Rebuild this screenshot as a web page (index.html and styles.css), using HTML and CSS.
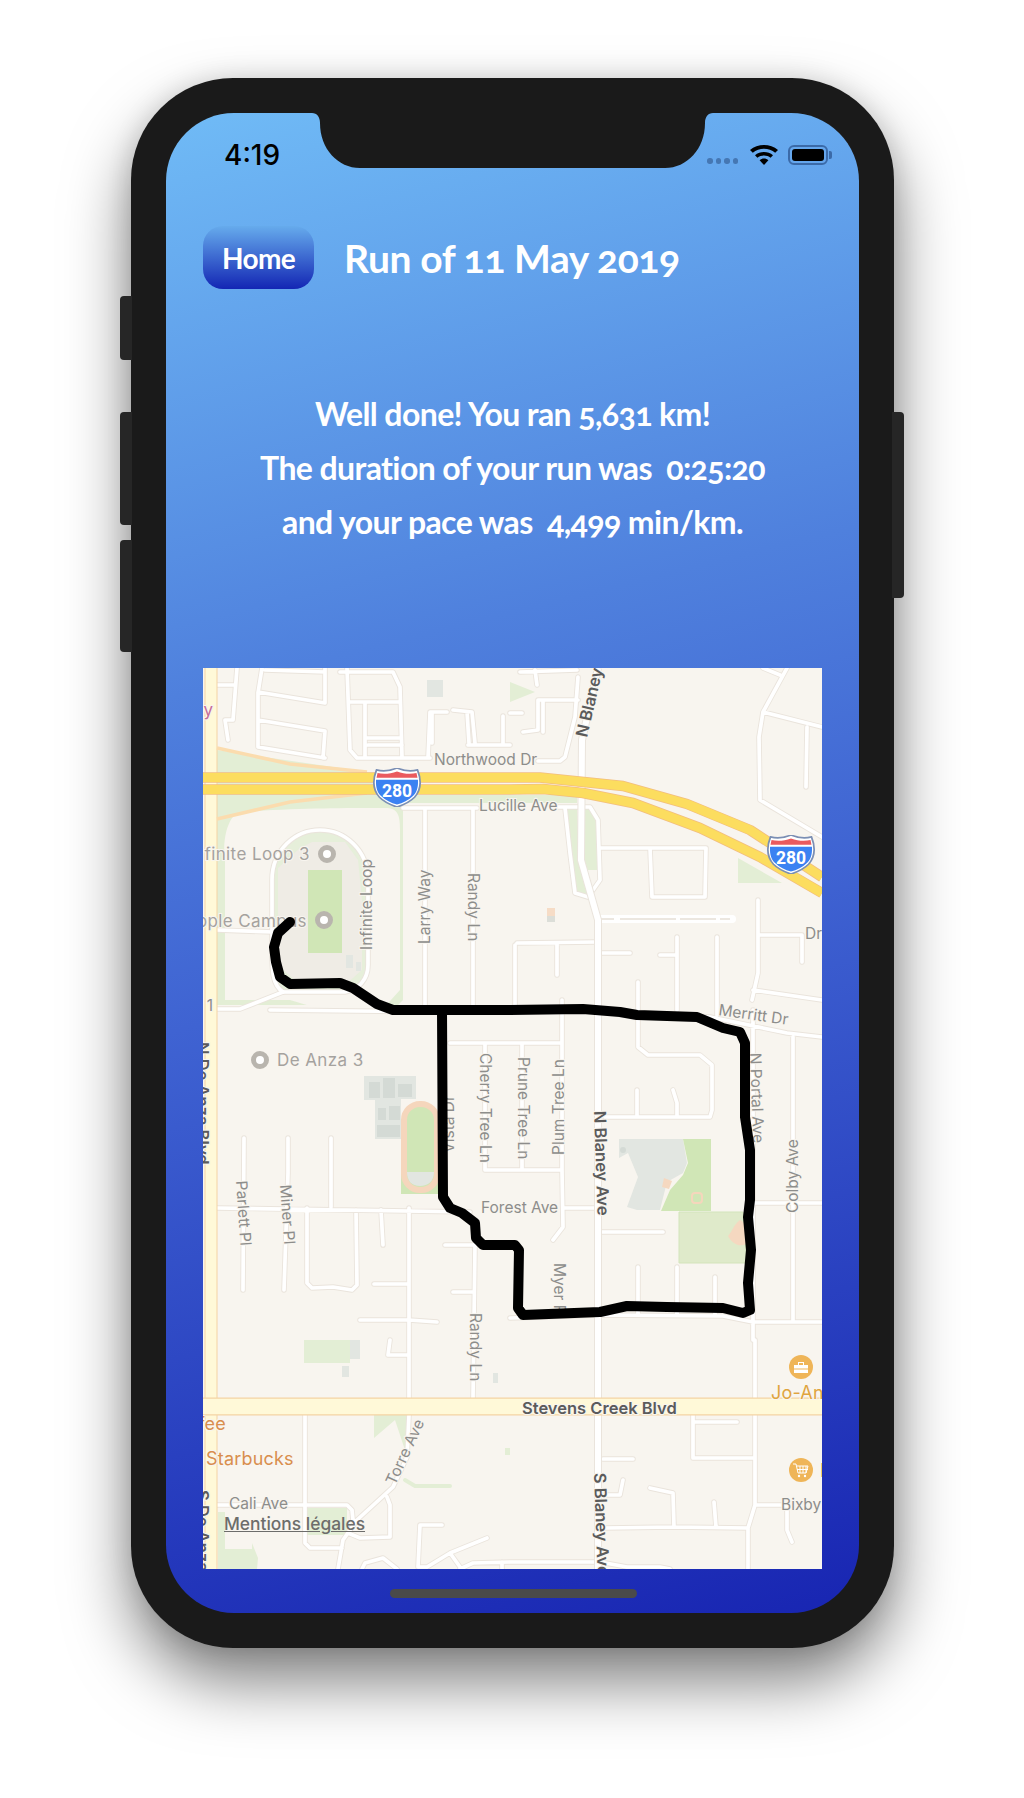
FILE: index.html
```html
<!DOCTYPE html>
<html lang="en">
<head>
<meta charset="utf-8">
<title>Run of 11 May 2019</title>
<link rel="stylesheet" href="styles.css">
</head>
<body>
<div class="phone">
  <span class="side-btn side-mute"></span>
  <span class="side-btn side-up"></span>
  <span class="side-btn side-down"></span>
  <span class="side-btn side-power"></span>
  <main class="screen">
    <svg class="notch" viewBox="0 0 401 55" aria-hidden="true"><path d="M0 0C5 0 8 4 8 10C8 36 26 55 48 55L353 55C375 55 393 36 393 10C393 4 396 0 401 0Z"/></svg>
    <div class="status">
      <span class="clock">4:19</span>
      <div class="status-icons">
        <span class="signal"><i></i><i></i><i></i><i></i></span>
        <svg class="wifi" viewBox="0 0 28 20" aria-hidden="true">
          <path d="M14 20L9.6 15.2C12.2 13 15.8 13 18.4 15.2Z"/>
          <path d="M7.4 12.8L5 10.2C9.9 5.9 18.1 5.9 23 10.2L20.6 12.8C16.9 9.6 11.1 9.6 7.4 12.8Z"/>
          <path d="M2.8 7.8L0 4.9C7.7-1.6 20.3-1.6 28 4.9L25.2 7.8C18.9 2.5 9.1 2.5 2.8 7.8Z"/>
        </svg>
        <span class="battery"><i></i></span>
      </div>
    </div>
    <header class="top">
      <a class="home" href="#">Home</a>
      <h1 class="title">Run of 11 May 2019</h1>
    </header>
    <section class="message">
      <p>Well done! You ran 5,631 km!</p>
      <p>The duration of your run was&nbsp; 0:25:20</p>
      <p>and your pace was&nbsp; 4,499 min/km.</p>
    </section>
    <div class="map">
      <svg class="map-svg" viewBox="203 668 619 901" aria-label="Map of the run">
        <defs>
          <path id="roads" d="M217 685H235M237 668L233 720H225L228 740M262 668L258 693V747L325 758M258 692L325 703V668M258 720L325 731L323 758M265 670L325 672M340 672H393L400 687L402 757M347 668L350 750L357 758H430M350 702H400M365 703V757M365 738H400M368 745H402M428 758L430 712H447M453 710L472 712L475 743M432 712V743M467 712L469 743M503 716V743M468 745H510M520 672L577 670M535 670L537 685M538 700H578M538 700V730L523 732M543 700V732M510 713H522M578 677L575 717L565 757L560 761H538M787 668L763 712L759 737L760 800L822 837M763 712L822 727M807 727L806 787M763 668L780 675M403 808H477M425 810V1010M473 810V1010M558 807H590L598 820L600 880L593 890L588 897L575 893L570 853L565 808M600 848H706L705 897H652L650 848M598 953H630M660 955H677M677 937V1010M717 937V1015M638 982V1047L648 1055H700L712 1065V1110L710 1117H605M758 900V973L752 1000M758 935H802V962M753 990L822 1000M517 943L597 942M515 945V1012M557 943V975M217 930L273 932M217 1009H240L283 992M270 1010L443 1012L600 1010L710 1017L787 1033L822 1037M753 1010V1340M755 1340V1505L748 1528V1569M450 1043H562M562 1000V1170L563 1227L553 1240M522 1043V1170M485 1043V1170H562M637 1090V1117M673 1090L677 1103V1117M793 1037V1320M753 1203H822M563 1208H599M599 1232H663M638 1267V1315M677 1267V1315M715 1277V1315M510 1318L600 1315L723 1316L753 1322H822M475 1245H445M475 1245L473 1398M453 1292H473M244 1138L243 1290M288 1138V1173L284 1290M331 1138V1207M217 1208L470 1212M307 1208V1283L312 1288L333 1287L352 1290L357 1285L356 1210M381 1210L383 1245M409 1208V1398M374 1284H409M360 1320H409L437 1322M390 1340L388 1355H409M305 1415V1543L310 1548H342M217 1505H347L352 1510L353 1520L357 1522M409 1415L407 1457L393 1487L357 1520L343 1540L338 1569M387 1497L390 1505V1537L360 1538L348 1533M420 1525H442M420 1525L418 1567H427L450 1553L487 1538M450 1553L460 1567M362 1569L365 1563L383 1558L397 1569M460 1569L473 1563L510 1562H600L627 1567H660L670 1569M502 1562V1569M755 1505H787V1530L792 1542M603 1459H633M693 1413V1458H755M695 1422H737M608 1495H620L623 1480M650 1488L673 1493L674 1527M714 1502L716 1527M605 1528L673 1527L748 1528M755 1340V1400"/>
          <path id="loop" d="M283 992C272 985 272 970 272 950V880C272 850 295 830 320 830C345 830 368 850 368 880V965C368 980 358 990 345 992L283 992"/>
          <path id="wide" d="M598 668L582 740L581 860L598 920V1569"/>
          <symbol id="shield" viewBox="0 0 50 40">
            <path class="shield-edge" d="M4 2C11 4 18 3 25 0C32 3 39 4 46 2C50 12 50 22 43 30C38 35 31 38 25 40C19 38 12 35 7 30C0 22 0 12 4 2Z"/>
            <path class="shield-red" d="M5 5C11 6.5 18 6 25 3.5C32 6 39 6.5 45 5L46 10H4Z"/>
            <path class="shield-blue" d="M3.5 12H46.5C47 20 45 25.500 41 29C37 33 31 36 25 37.500C19 36 13 33 9 29C5 25.500 3 20 3.500 12Z"/>
            <text class="shield-text" x="25" y="30">280</text>
          </symbol>
        </defs>
        <rect class="land" x="203" y="668" width="619" height="901"/>

        <path class="green" d="M217 750L367 772L403 775V1000L390 1013H350L330 1005H217Z"/>
        <path class="green" d="M403 795H577V803H403Z"/>
        <path class="land" d="M240 812C300 808 340 808 385 808C398 808 400 815 400 830V990L380 1012H330L290 1000H225V860C222 840 228 815 240 812Z"/>
        <path class="green-soft" d="M272 880C272 850 295 832 320 832C345 832 368 850 368 880V965C368 980 358 990 345 990H285C275 985 272 970 272 950Z"/>
        <path class="bldg-soft" d="M278 868L300 848L312 842L345 842L358 860L362 900V970L345 985H300L278 965Z"/>
        <rect class="green-mid" x="308" y="870" width="34" height="83"/>
        <rect class="bldg" x="346" y="955" width="7" height="13"/>
        <rect class="bldg" x="356" y="962" width="5" height="9"/>
        <path class="green" d="M510 682L535 692L510 702ZM738 858L782 883H738ZM565 808H577L579 860L588 895L577 893L570 853ZM585 808H592L597 823V870H585V860Z"/>
        <rect class="bldg" x="427" y="680" width="16" height="17"/>
        <rect class="tile-peach" x="547" y="908" width="8" height="8"/>
        <rect class="tile-gray" x="547" y="916" width="8" height="6"/>

        <path class="bldg" d="M364 1076H416V1099H401V1139H375V1100H364Z"/>
        <path class="bldg-dark" d="M369 1082H380V1098H369ZM383 1078H395V1098H383ZM398 1084H412V1097H398ZM378 1108H386V1120H378ZM389 1106H400V1120H389ZM377 1125H400V1137H377Z"/>
        <rect class="green-mid" x="401" y="1170" width="37" height="24"/>
        <rect class="track" x="404" y="1104" width="33" height="86" rx="16"/>
        <path class="bldg" d="M407 1172H434C434 1181 428 1186 420 1186C412 1186 407 1181 407 1172Z"/>

        <path class="bldg" d="M619 1139H683L687 1163L683 1173L667 1182L660 1210H637L627 1207L638 1177L628 1153L619 1158Z"/>
        <circle class="bldg-dark" cx="623" cy="1150" r="3"/>
        <path class="green-mid" d="M683 1139H711V1211H661L670 1190L683 1175L688 1163Z"/>
        <path class="green-field" d="M679 1212H743L747 1263H679Z"/>
        <path class="peach" d="M664 1178L672 1181L669 1189L662 1187ZM740 1220C746 1222 747 1232 746 1244C740 1247 733 1245 728 1236C732 1232 734 1224 740 1220Z"/>
        <rect class="diamond" x="692" y="1193" width="10" height="10" rx="3"/>

        <path class="green" d="M304 1340H350V1363H304ZM374 1415H407L405 1450L395 1420L374 1438ZM505 1448H510V1455H505ZM218 1512H225V1549H252V1543L258 1558L257 1569H218ZM307 1508H347V1535H307Z"/>
        <path class="green-line" d="M405 1480L415 1486H450"/>
        <path class="bldg" d="M350 1340H360V1359H350ZM342 1366H349V1377H342ZM493 1373H498V1383H493Z"/>

        <use class="road-edge" href="#roads"/>
        <use class="road-edge" href="#loop"/>
        <use class="road" href="#roads"/>
        <use class="road" href="#loop"/>
        <path class="road-double" d="M600 919H732"/>
        <path class="road-median" d="M600 919H614M620 919H676M680 919H716M720 919H730"/>
        <use class="wide-edge" href="#wide"/>
        <use class="wide" href="#wide"/>

        <path class="art-edge art-v" d="M211 668V1569"/>
        <path class="art art-v" d="M211 668V1569"/>
        <path class="art-edge art-h" d="M203 1406.500H822"/>
        <path class="art art-h" d="M203 1406.500H822"/>
        <path class="ramp" d="M217 748L290 764L367 772M217 819L290 802L367 793"/>
        <path class="hw-edge" d="M203 777.500H510H540L623 786L687 804L750 830L822 877"/>
        <path class="hw-edge" d="M203 789.500H510L543 789L583 793L633 803L700 828L760 857L822 893"/>
        <path class="hw" d="M203 777.500H510H540L623 786L687 804L750 830L822 877"/>
        <path class="hw" d="M203 789.500H510L543 789L583 793L633 803L700 828L760 857L822 893"/>

        <use href="#shield" x="372" y="768" width="50" height="39"/>
        <use href="#shield" x="766" y="835" width="50" height="39"/>

        <text class="lbl" x="434" y="765">Northwood Dr</text>
        <text class="lbl" x="479" y="811">Lucille Ave</text>
        <text class="lbl" x="805" y="939">Dr</text>
        <text class="lbl" x="213" y="1011" text-anchor="end">1</text>
        <text class="lbl" transform="translate(372 950) rotate(-90)">Infinite Loop</text>
        <text class="lbl" transform="translate(430 944) rotate(-90)">Larry Way</text>
        <text class="lbl" transform="translate(468 873) rotate(90)">Randy Ln</text>
        <text class="lbl" transform="translate(454 1153) rotate(-90)">Vista Dr</text>
        <text class="lbl" transform="translate(480 1053) rotate(90)">Cherry Tree Ln</text>
        <text class="lbl" transform="translate(518 1057) rotate(90)">Prune Tree Ln</text>
        <text class="lbl" transform="translate(564 1155) rotate(-90)">Plum Tree Ln</text>
        <text class="lbl" transform="translate(750 1053) rotate(88)">N Portal Ave</text>
        <text class="lbl" transform="translate(798 1213) rotate(-90)">Colby Ave</text>
        <text class="lbl" transform="translate(718 1015) rotate(8)">Merritt Dr</text>
        <text class="lbl" x="481" y="1213">Forest Ave</text>
        <text class="lbl" transform="translate(554 1263) rotate(90)">Myer Pl</text>
        <text class="lbl" transform="translate(236 1181) rotate(86)">Parlett Pl</text>
        <text class="lbl" transform="translate(280 1185) rotate(86)">Miner Pl</text>
        <text class="lbl" transform="translate(470 1313) rotate(90)">Randy Ln</text>
        <text class="lbl" transform="translate(395 1486) rotate(-65)">Torre Ave</text>
        <text class="lbl" x="229" y="1509">Cali Ave</text>
        <text class="lbl" x="781" y="1510">Bixby</text>

        <text class="lbl-b" transform="translate(587 738) rotate(-77)">N Blaney</text>
        <text class="lbl-b" transform="translate(594 1111) rotate(88)">N Blaney Ave</text>
        <text class="lbl-b" transform="translate(594 1473) rotate(88)">S Blaney Ave</text>
        <text class="lbl-b" x="522" y="1414">Stevens Creek Blvd</text>
        <text class="lbl-b" transform="translate(197 1042) rotate(90)">N De Anza Blvd</text>
        <text class="lbl-b" transform="translate(197 1490) rotate(90)">S De Anza</text>

        <text class="poi" x="310" y="860" text-anchor="end">Infinite Loop 3</text>
        <text class="poi" x="307" y="927" text-anchor="end">Apple Campus</text>
        <text class="poi" x="277" y="1066">De Anza 3</text>
        <circle class="pin" cx="327" cy="854" r="6.500"/>
        <circle class="pin" cx="324" cy="920" r="6.500"/>
        <circle class="pin" cx="260" cy="1060" r="6.500"/>

        <text class="poi-pink" x="213" y="716" text-anchor="end">y</text>
        <text class="poi-orange" x="226" y="1430" text-anchor="end">Coffee</text>
        <text class="poi-orange" x="206" y="1465">Starbucks</text>
        <text class="poi-gold" x="771" y="1399">Jo-Ann</text>
        <text class="poi-gold" x="820" y="1477">Lucky</text>

        <circle class="shop" cx="801" cy="1367" r="12"/>
        <path class="shop-icon" d="M794 1365H808V1373H794ZM798 1365V1362H804V1365H803V1363H799V1365Z"/>
        <path class="shop-line" d="M794 1369H808"/>
        <circle class="shop" cx="801" cy="1470" r="12"/>
        <path class="shop-line" d="M793 1464H796L798 1473H806L808 1466H797M800 1466V1473M803 1466V1473M806 1466V1473M797 1469.500H808"/>
        <circle class="shop-dot" cx="799" cy="1476" r="1.200"/>
        <circle class="shop-dot" cx="805" cy="1476" r="1.200"/>

        <path class="route" d="M290 922L278 933L274 947L276 962L280 977L290 984L340 983L353 988L377 1004L393 1010L443 1010L510 1010L583 1009L620 1012L637 1015L697 1017L723 1028L740 1032L745 1043L745 1117L750 1150L750 1200L748 1217L751 1250L748 1283L750 1310L743 1313L723 1308L667 1307L627 1306L600 1312L523 1315L518 1308L519 1250L515 1245L483 1245L476 1238L475 1223L462 1213L450 1208L443 1197L442 1010"/>
      </svg>
      <a class="legal" href="#">Mentions légales</a>
    </div>
    <span class="home-bar"></span>
  </main>
</div>
</body>
</html>
```
FILE: styles.css
```css
* { box-sizing: border-box; }
html, body { margin: 0; padding: 0; background: #fff; }
body { min-height: 1798px; padding: 78px 0 0 131px; }

.phone {
  position: relative;
  width: 763px;
  height: 1570px;
  padding: 35px;
  background: #1a1a1a;
  border-radius: 102px;
  box-shadow: 0 34px 64px rgba(0, 0, 0, .5), 0 0 26px rgba(0, 0, 0, .12);
}
.side-btn { position: absolute; width: 12px; background: #262626; }
.side-mute { left: -11px; top: 218px; height: 64px; border-radius: 4px 0 0 4px; }
.side-up { left: -11px; top: 334px; height: 113px; border-radius: 4px 0 0 4px; }
.side-down { left: -11px; top: 462px; height: 112px; border-radius: 4px 0 0 4px; }
.side-power { right: -10px; top: 334px; height: 186px; border-radius: 0 4px 4px 0; }

.screen {
  position: relative;
  display: flex;
  flex-direction: column;
  height: 1500px;
  padding: 0 37px;
  overflow: hidden;
  border-radius: 68px;
  background: linear-gradient(166deg, #70bbf6 0%, #4f80dd 35%, #3f63d2 55%, #1825b2 100%);
  font-family: "Lato", "Noto Sans", sans-serif;
  color: #fff;
}
.notch { position: absolute; left: 146px; top: 0; width: 401px; height: 55px; fill: #1a1a1a; }

.status {
  display: flex;
  justify-content: space-between;
  align-items: flex-start;
  height: 113px;
  padding: 24px 0 0 21px;
  color: #000;
}
.clock { font: 500 28px/36px "Inter", sans-serif; }
.status-icons { display: flex; align-items: flex-start; margin-right: -6px; padding-top: 8px; }
.signal { display: flex; gap: 3px; margin: 13px 12px 0 0; }
.signal i { width: 5.5px; height: 5.5px; border-radius: 50%; background: #4577b3; }
.wifi { width: 28px; height: 20px; margin-right: 10px; fill: #000; }
.battery {
  position: relative;
  width: 40px;
  height: 20px;
  padding: 2px;
  border: 2px solid #3b6aa8;
  border-radius: 6px;
}
.battery i { display: block; height: 100%; background: #000; border-radius: 3px; }
.battery::after {
  content: "";
  position: absolute;
  right: -6px;
  top: 4px;
  width: 3px;
  height: 8px;
  background: #3b6aa8;
  border-radius: 0 2px 2px 0;
}

.top { display: flex; align-items: center; gap: 30px; height: 63px; }
.home {
  display: flex;
  align-items: center;
  justify-content: center;
  width: 111px;
  height: 63px;
  border-radius: 20px;
  background: linear-gradient(180deg, #66abec 0%, #1326b4 100%);
  color: #fff;
  font-size: 28px;
  font-weight: 700;
  letter-spacing: -.6px;
  text-decoration: none;
}
.title {
  margin: 0;
  font-size: 39px;
  font-weight: 700;
  letter-spacing: -.4px;
  font-variant-numeric: oldstyle-nums;
  white-space: nowrap;
}

.message {
  display: flex;
  flex-direction: column;
  align-items: center;
  margin-top: 98px;
  font-size: 32px;
  font-weight: 700;
  line-height: 54px;
  letter-spacing: -.6px;
  font-variant-numeric: oldstyle-nums;
}
.message p { margin: 0; white-space: nowrap; }

.map { position: relative; width: 619px; height: 901px; margin-top: 119px; flex: none; }
.map-svg { display: block; width: 619px; height: 901px; }
.legal {
  position: absolute;
  left: 21px;
  top: 846px;
  font: 500 17.400px/20px "Inter", sans-serif;
  color: #6d6d6b;
}
.home-bar {
  position: absolute;
  left: 224px;
  bottom: 15px;
  width: 247px;
  height: 9px;
  border-radius: 5px;
  background: #4a4a4a;
}

.land { fill: #f8f5ef; }
.green { fill: #e3eed5; }
.green-soft { fill: #e6efda; }
.green-mid { fill: #d0e6b6; }
.green-field { fill: #dfeaca; stroke: #d3e4bb; stroke-width: 1; }
.green-line { fill: none; stroke: #e3eed5; stroke-width: 4; stroke-linecap: round; }
.bldg-soft { fill: #efece5; }
.bldg { fill: #e2e6e1; }
.bldg-dark { fill: #d4dad5; }
.tile-peach { fill: #f6dcc6; }
.tile-gray { fill: #dcded8; }
.track { fill: #d0e6b6; stroke: #f5d6bc; stroke-width: 6; }
.peach { fill: #f5d8c0; }
.diamond { fill: #d0e6b6; stroke: #f5d6bc; stroke-width: 2; }

.road-edge { fill: none; stroke: #eae4dc; stroke-width: 5.500; stroke-linejoin: round; stroke-linecap: round; }
.road { fill: none; stroke: #fff; stroke-width: 3.700; stroke-linejoin: round; stroke-linecap: round; }
.wide-edge { fill: none; stroke: #eae4dc; stroke-width: 8; }
.wide { fill: none; stroke: #fff; stroke-width: 6; }
.road-double { fill: none; stroke: #fff; stroke-width: 8; stroke-linecap: round; }
.road-median { fill: none; stroke: #e6dfd6; stroke-width: 1.500; }
.art-edge { fill: none; stroke: #f4d3a4; }
.art { fill: none; stroke: #fff9d8; }
.art-edge.art-v { stroke-width: 13; }
.art.art-v { stroke-width: 11; }
.art-edge.art-h { stroke-width: 18; }
.art.art-h { stroke-width: 15.500; }
.ramp { fill: none; stroke: #fbdcae; stroke-width: 3.500; }
.hw-edge { fill: none; stroke: #f2bd7f; stroke-width: 10.500; stroke-linejoin: round; }
.hw { fill: none; stroke: #fcdd5f; stroke-width: 9; stroke-linejoin: round; }

.shield-edge { fill: #fff; stroke: #7b8fb4; stroke-width: 1.800; }
.shield-red { fill: #ea5a5e; }
.shield-blue { fill: #3b82f2; }
.shield-text { font: 700 18px "Roboto", sans-serif; fill: #fff; text-anchor: middle; }

.lbl, .lbl-b, .poi, .poi-pink, .poi-orange, .poi-gold {
  font-family: "Inter", sans-serif;
  paint-order: stroke;
  stroke: #f8f5ef;
  stroke-width: 2px;
}
.lbl { font-size: 15.500px; fill: #8d8d8b; }
.lbl-b { font-size: 16.500px; font-weight: 600; fill: #5b5b5b; }
.poi { font-size: 17px; fill: #a5a29e; letter-spacing: .4px; }
.poi-pink { font-size: 17px; fill: #c66e9a; }
.poi-orange { font-size: 18px; fill: #d98e4d; letter-spacing: .2px; }
.poi-gold { font-size: 18px; fill: #e0a43e; letter-spacing: .2px; }
.pin { fill: #fff; stroke: #b9b5ae; stroke-width: 5; }
.shop { fill: #efb558; }
.shop-icon { fill: #fff; }
.shop-line { fill: none; stroke: #fff; stroke-width: 1; }
.shop-icon + .shop-line { stroke: #efb558; }
.shop-dot { fill: #fff; }
.route {
  fill: none;
  stroke: #000;
  stroke-width: 10;
  stroke-linejoin: round;
  stroke-linecap: round;
}
```
